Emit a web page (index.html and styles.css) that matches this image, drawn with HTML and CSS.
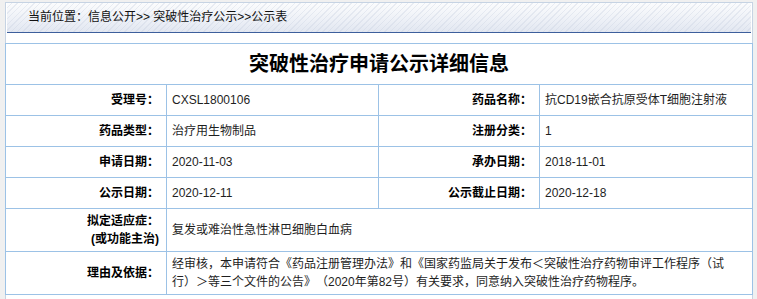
FILE: index.html
```html
<!DOCTYPE html>
<html lang="zh-CN">
<head>
<meta charset="utf-8">
<title>突破性治疗申请公示详细信息</title>
<link rel="stylesheet" href="styles.css">
</head>
<body>
<div class="page">
  <div class="crumb">当前位置：信息公开&gt;&gt; 突破性治疗公示&gt;&gt;公示表</div>
  <table class="info">
    <colgroup>
      <col class="c-label"><col class="c-value"><col class="c-label"><col class="c-value2">
    </colgroup>
    <tr class="row-title"><td colspan="4" class="title">突破性治疗申请公示详细信息</td></tr>
    <tr class="row"><th>受理号：</th><td>CXSL1800106</td><th>药品名称：</th><td>抗CD19嵌合抗原受体T细胞注射液</td></tr>
    <tr class="row"><th>药品类型：</th><td>治疗用生物制品</td><th>注册分类：</th><td>1</td></tr>
    <tr class="row"><th>申请日期：</th><td>2020-11-03</td><th>承办日期：</th><td>2018-11-01</td></tr>
    <tr class="row"><th>公示日期：</th><td>2020-12-11</td><th>公示截止日期：</th><td>2020-12-18</td></tr>
    <tr class="row-tall"><th>拟定适应症：<br>(或功能主治)</th><td colspan="3">复发或难治性急性淋巴细胞白血病</td></tr>
    <tr class="row-tall"><th>理由及依据：</th><td colspan="3">经审核，本申请符合《药品注册管理办法》和《国家药监局关于发布＜突破性治疗药物审评工作程序（试行）＞等三个文件的公告》（2020年第82号）有关要求，同意纳入突破性治疗药物程序。</td></tr>
  </table>
</div>
</body>
</html>
```
FILE: styles.css
```css
html, body {
  margin: 0;
  background: #f0f0f0;
}
body {
  padding: 2px 0 0 5px;
  font-family: "Liberation Sans", "Noto Sans CJK SC", sans-serif;
  font-size: 12px;
  color: #000;
  text-spacing-trim: space-all;
}
.page {
  width: 746px;
  border: 1px solid #c6d3e3;
  background: #fff;
  padding-bottom: 10px;
}
.crumb {
  margin: 0 1px;
  height: 29px;
  line-height: 29px;
  padding-left: 21px;
  border-bottom: 1px solid #3d5f9c;
  color: #111;
  background:
    repeating-linear-gradient(135deg, rgba(255,255,255,0) 0 3px, rgba(200,208,224,0.35) 3px 4px),
    linear-gradient(to bottom, #fbfcfd 0%, #eef1f7 55%, #e2e7f1 100%);
}
.info {
  table-layout: fixed;
  border-collapse: collapse;
  width: 748px;
  margin: 10px -1px 0;
}
.c-label { width: 161px; }
.c-value { width: 212px; }
.c-value2 { width: 213px; }
.info th, .info td {
  border: 1px solid #9cc2e6;
  padding: 0 5px;
  vertical-align: middle;
  line-height: 18px;
}
.info th {
  text-align: right;
  font-weight: bold;
  color: #000;
  padding-right: 7px;
}
.info td {
  text-align: left;
  color: #1e1e1e;
}
.info td.title {
  text-align: center;
  font-size: 20px;
  font-weight: bold;
  color: #000;
  height: 40px;
  padding: 0;
}
.row th, .row td { height: 30px; }
.row-tall th, .row-tall td { height: 42px; }
```
